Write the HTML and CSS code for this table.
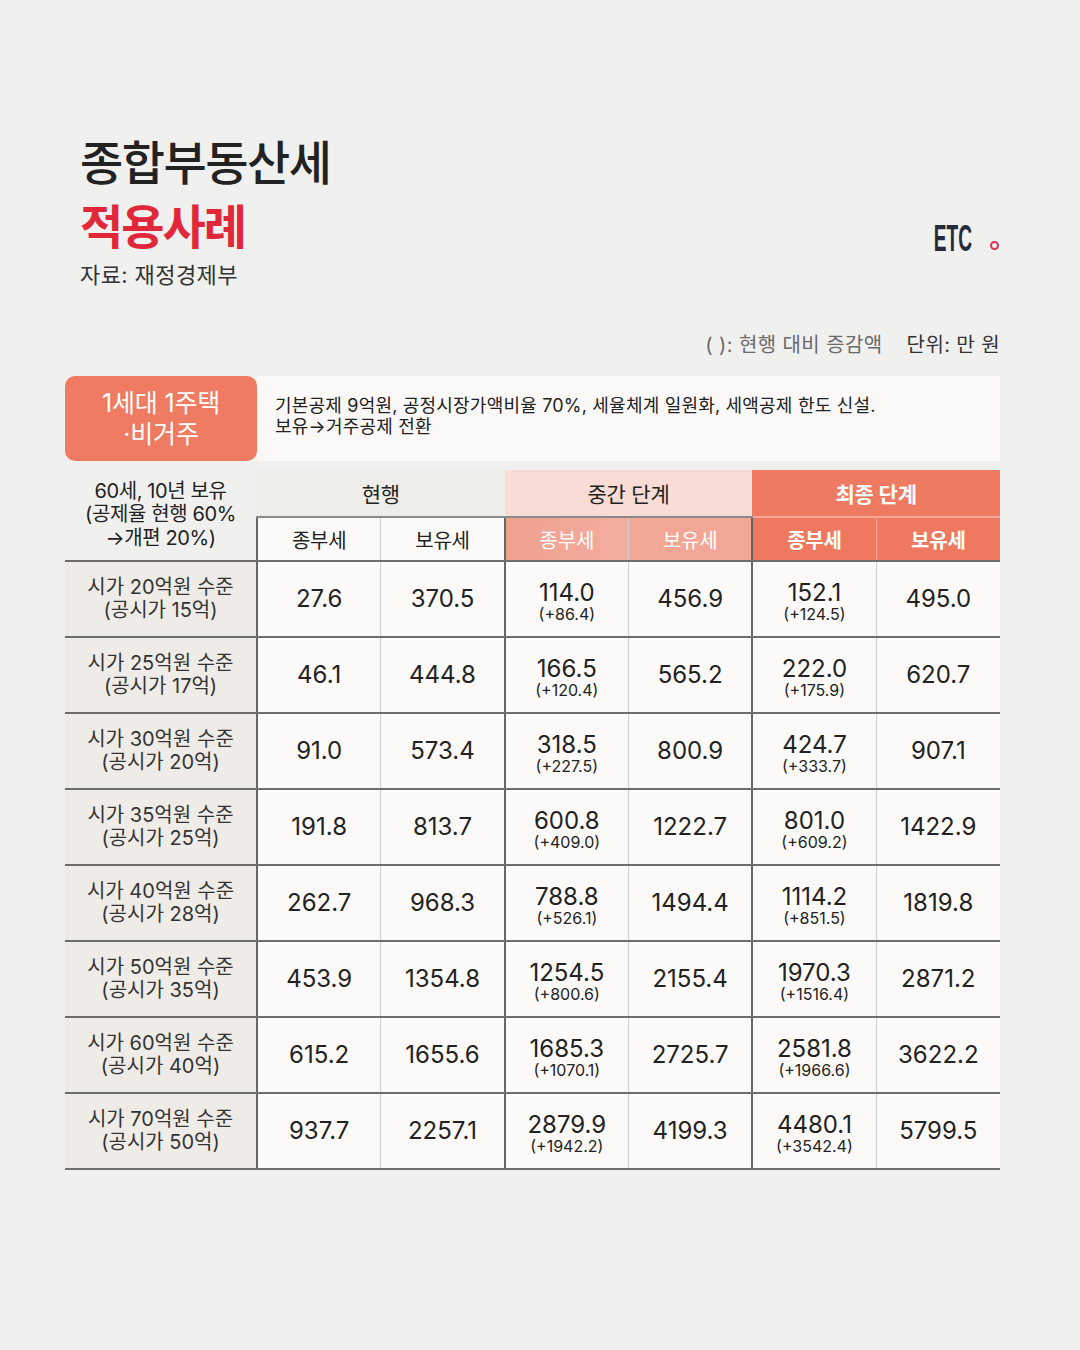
FILE: index.html
```html
<!DOCTYPE html>
<html lang="ko">
<head>
<meta charset="utf-8">
<link rel="stylesheet" href="styles.css">
</head>
<body>
<div class="page">
  <header class="head">
    <div class="titles">
      <h1 class="t1">종합부동산세</h1>
      <h2 class="t2">적용사례</h2>
      <p class="src">자료: 재정경제부</p>
    </div>
    <div class="brand"><span class="etc">ETC</span><span class="dot"></span></div>
  </header>
  <div class="notes"><span class="note1">( ): 현행 대비 증감액</span><span class="note2">단위: 만 원</span></div>
  <div class="cat">
    <div class="pill">1세대 1주택<br>·비거주</div>
    <div class="desc">기본공제 9억원, 공정시장가액비율 70%, 세율체계 일원화, 세액공제 한도 신설.<br>보유→거주공제 전환</div>
  </div>
  <table class="tbl">
    <colgroup>
      <col class="c-lab"><col class="c-n"><col class="c-n"><col class="c-n"><col class="c-n"><col class="c-n"><col class="c-n">
    </colgroup>
    <thead>
      <tr class="h1">
        <th rowspan="2" class="corner">60세, 10년 보유<br>(공제율 현행 60%<br>→개편 20%)</th>
        <th colspan="2" class="g-cur">현행</th>
        <th colspan="2" class="g-mid">중간 단계</th>
        <th colspan="2" class="g-fin">최종 단계</th>
      </tr>
      <tr class="h2">
        <th class="s-cur gl">종부세</th><th class="s-cur">보유세</th>
        <th class="s-mid gl">종부세</th><th class="s-mid">보유세</th>
        <th class="s-fin gl">종부세</th><th class="s-fin">보유세</th>
      </tr>
    </thead>
    <tbody>
      <tr><th>시가 20억원 수준<br>(공시가 15억)</th><td class="gl">27.6</td><td>370.5</td><td class="gl two"><span class="num">114.0</span><small>(+86.4)</small></td><td>456.9</td><td class="gl two"><span class="num">152.1</span><small>(+124.5)</small></td><td>495.0</td></tr>
      <tr><th>시가 25억원 수준<br>(공시가 17억)</th><td class="gl">46.1</td><td>444.8</td><td class="gl two"><span class="num">166.5</span><small>(+120.4)</small></td><td>565.2</td><td class="gl two"><span class="num">222.0</span><small>(+175.9)</small></td><td>620.7</td></tr>
      <tr><th>시가 30억원 수준<br>(공시가 20억)</th><td class="gl">91.0</td><td>573.4</td><td class="gl two"><span class="num">318.5</span><small>(+227.5)</small></td><td>800.9</td><td class="gl two"><span class="num">424.7</span><small>(+333.7)</small></td><td>907.1</td></tr>
      <tr><th>시가 35억원 수준<br>(공시가 25억)</th><td class="gl">191.8</td><td>813.7</td><td class="gl two"><span class="num">600.8</span><small>(+409.0)</small></td><td>1222.7</td><td class="gl two"><span class="num">801.0</span><small>(+609.2)</small></td><td>1422.9</td></tr>
      <tr><th>시가 40억원 수준<br>(공시가 28억)</th><td class="gl">262.7</td><td>968.3</td><td class="gl two"><span class="num">788.8</span><small>(+526.1)</small></td><td>1494.4</td><td class="gl two"><span class="num">1114.2</span><small>(+851.5)</small></td><td>1819.8</td></tr>
      <tr><th>시가 50억원 수준<br>(공시가 35억)</th><td class="gl">453.9</td><td>1354.8</td><td class="gl two"><span class="num">1254.5</span><small>(+800.6)</small></td><td>2155.4</td><td class="gl two"><span class="num">1970.3</span><small>(+1516.4)</small></td><td>2871.2</td></tr>
      <tr><th>시가 60억원 수준<br>(공시가 40억)</th><td class="gl">615.2</td><td>1655.6</td><td class="gl two"><span class="num">1685.3</span><small>(+1070.1)</small></td><td>2725.7</td><td class="gl two"><span class="num">2581.8</span><small>(+1966.6)</small></td><td>3622.2</td></tr>
      <tr><th>시가 70억원 수준<br>(공시가 50억)</th><td class="gl">937.7</td><td>2257.1</td><td class="gl two"><span class="num">2879.9</span><small>(+1942.2)</small></td><td>4199.3</td><td class="gl two"><span class="num">4480.1</span><small>(+3542.4)</small></td><td>5799.5</td></tr>
    </tbody>
  </table>
</div>
</body>
</html>
```

FILE: styles.css
```css
* { box-sizing: border-box; }
html, body { margin: 0; padding: 0; }
body {
  background: #f0f0ef;
  font-family: "Inter", "Noto Sans CJK KR", "Noto Sans", sans-serif;
  color: #222;
  width: 1080px;
  height: 1350px;
}
.page { padding: 128px 80px 0 65px; }
.head { display: flex; justify-content: space-between; align-items: flex-end; padding-left: 15px; }
.titles { display: flex; flex-direction: column; }
.t1 { margin: 0; font-family: "Noto Sans CJK KR", sans-serif; font-size: 47px; line-height: 64px; font-weight: 500; letter-spacing: -1.5px; color: #222; }
.t2 { margin: 0; font-family: "Noto Sans CJK KR", sans-serif; font-size: 47px; line-height: 64px; font-weight: 700; letter-spacing: -2px; color: #e0283a; }
.src { margin: 4px 0 0; font-size: 22px; line-height: 30px; color: #333; letter-spacing: 0.4px; }
.brand { display: flex; align-items: center; margin-bottom: 33px; }
.etc {
  font-family: "Liberation Sans", sans-serif; font-weight: 700; font-size: 36px; color: #262b3b;
  display: inline-block; transform: scaleX(0.53); transform-origin: right center; line-height: 36px;
  margin-right: 18px;
}
.dot { width: 9px; height: 9px; border: 2px solid #d6335a; border-radius: 50%; margin-top: 12px; margin-right: 1px; }
.notes { display: flex; justify-content: flex-end; gap: 24px; margin-top: 41px; font-size: 20px; line-height: 28px; letter-spacing: 0.4px; }
.note1 { color: #6a6a6a; }
.note2 { color: #333; }
.cat { display: flex; margin-top: 17px; height: 85px; }
.pill {
  width: 192px; background: #ef7b62; color: #fff; border-radius: 10px;
  display: flex; align-items: center; justify-content: center; text-align: center;
  font-size: 25px; line-height: 31px; letter-spacing: -0.2px;
}
.desc {
  flex: 1; background: #faf9f7; padding: 19px 0 0 18px;
  font-size: 18px; line-height: 21px; color: #222; letter-spacing: 0.2px;
}
.tbl { margin-top: 9px; border-collapse: collapse; table-layout: fixed; width: 935px; }
.c-lab { width: 192px; }
.c-n { width: 123.8px; }
.tbl th, .tbl td { padding: 0; text-align: center; font-weight: 400; }
.h1 th { height: 47px; font-size: 21px; letter-spacing: -0.2px; }
.h2 th { height: 44px; font-size: 20px; letter-spacing: -0.2px; border-top: 2px solid #8a8a8a; border-left: 1px solid #cfcfcf; border-bottom: 2px solid #6e6e6e; }
.corner { font-size: 20px !important; line-height: 23.5px; color: #222; border-bottom: 2px solid #6e6e6e; letter-spacing: -0.4px !important; }
.g-cur { background: #efedea; color: #222; }
.g-mid { background: #f9dcd6; color: #222; }
.g-fin { background: #ef7a62; color: #fff; font-weight: 700 !important; }
.s-cur { background: #fbfaf8; color: #222; }
.s-mid { background: #f2a796; color: #fff; }
.h2 .s-mid.gl { background: linear-gradient(90deg, #f0a08f, #f3ad9e); }
.s-fin { background: #ee7860; color: #fff; font-weight: 700 !important; border-top-color: #f4a594 !important; border-left-color: #f4a594 !important; }
.tbl .gl { border-left: 2px solid #666 !important; }
tbody th {
  background: #efece8; height: 76px; font-size: 20px; line-height: 23px; color: #333;
  border-bottom: 2px solid #6e6e6e; letter-spacing: 0;
}
tbody td {
  background: #fbfaf8; font-size: 24px; line-height: 24px; color: #222;
  border-bottom: 2px solid #6e6e6e; border-left: 1px solid #cfcfcf; letter-spacing: 0;
}
tbody td.two { padding-top: 6px; }
.num { display: block; line-height: 24px; }
tbody td small { display: block; font-size: 16px; line-height: 18px; letter-spacing: 0; }
```
